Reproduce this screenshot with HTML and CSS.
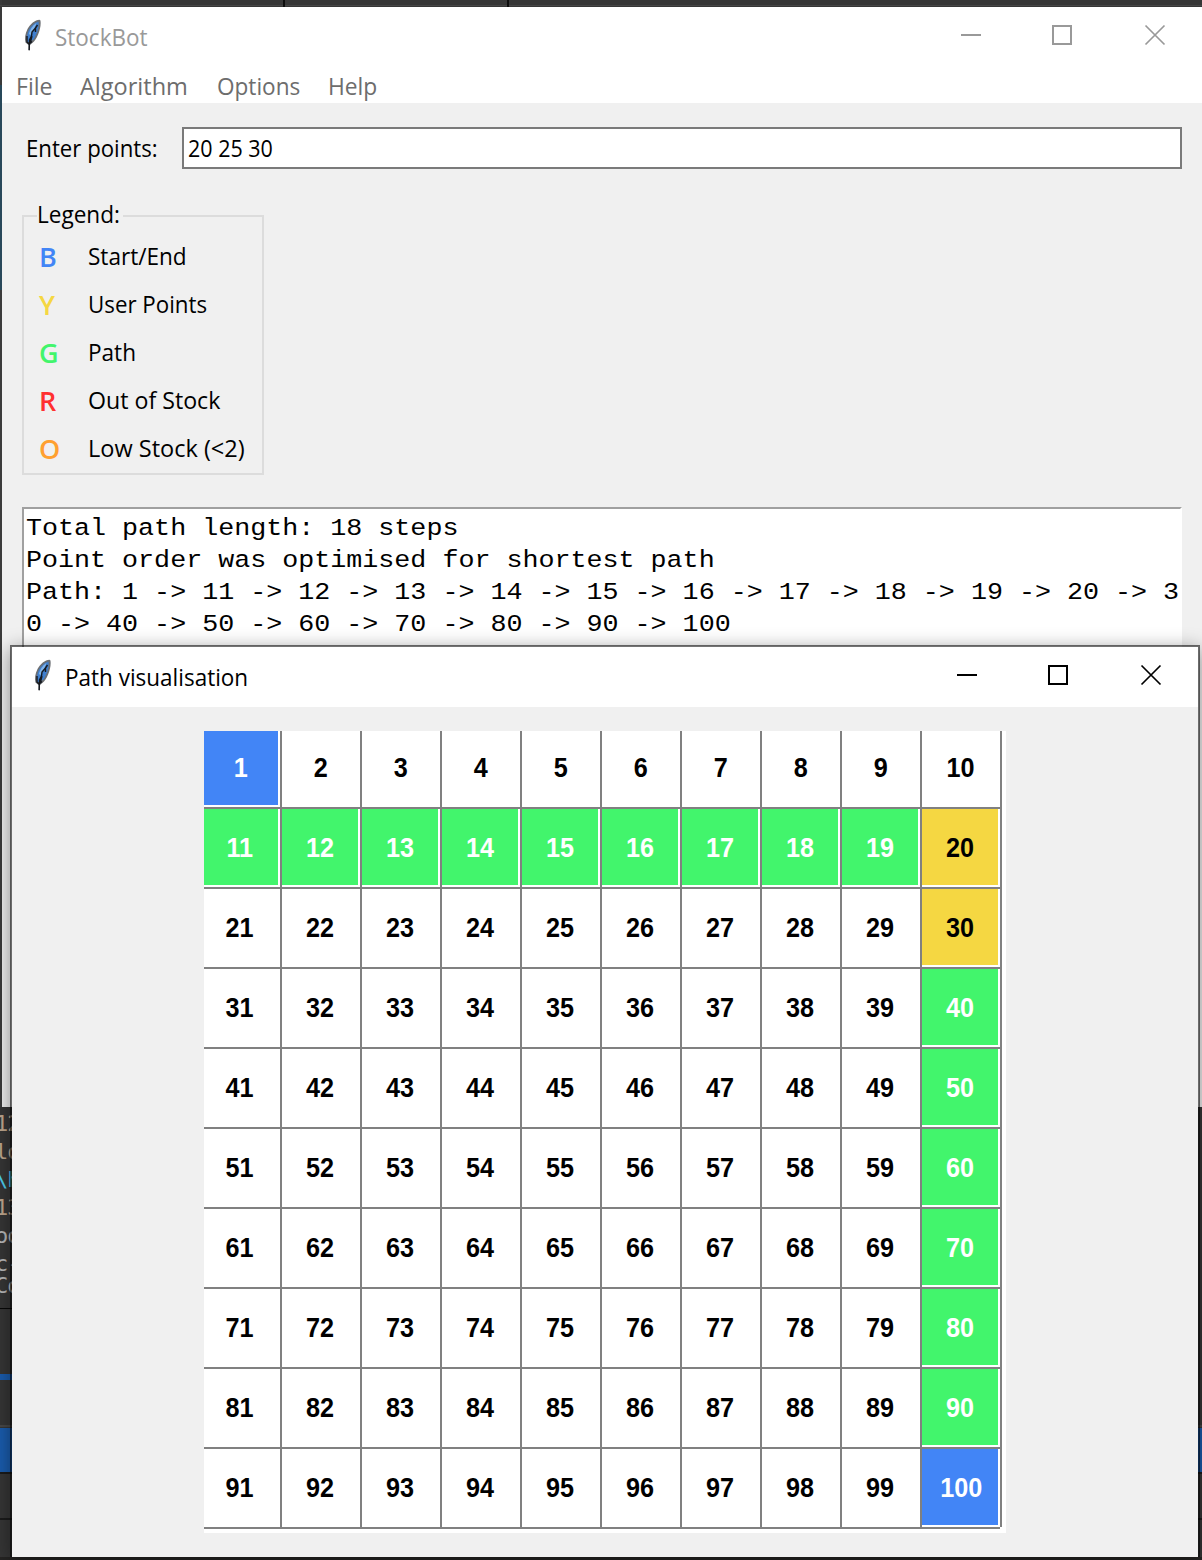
FILE: index.html
```
<!DOCTYPE html>
<html lang="en">
<head>
<meta charset="utf-8">
<title>StockBot</title>
<link rel="stylesheet" href="styles.css">
</head>
<body>
<svg width="0" height="0" class="defs">
  <symbol id="feather" viewBox="0 0 20 32">
    <path d="M16.5 .8C12 1 7.200 5 4.500 10C2 15 1.500 20 2.500 23.500L5.500 26V31.500H7V26L11 22.500C15 18 18.500 8 17.500 1.500Z" fill="#6c6f73"/>
    <path d="M15.500 2.500C11 4 7 8 5.200 12.500C3.500 17 3.800 21 4.600 23.500L10.500 20.500C13.500 16 16.500 8 15.500 2.500Z" fill="#3f7fce"/>
    <path d="M13.500 4C9.500 6.500 6.800 11 5.800 15L7.500 16L11 10Z" fill="#80b4ea"/>
    <path d="M14.500 6L12.500 9L9 13L8.500 17L6.500 21L6.200 31M12.500 9V13M9 17L7.500 23M4 17V23L6 25L9 22.500" fill="none" stroke="#15191f" stroke-width="1.400"/>
  </symbol>
</svg>

<div class="backdrop">
  <div class="code-edge">
    <span class="tan">12</span><span class="tan">lo</span><span class="cyan">\h</span><span class="tan">13</span><span>oo</span><span>c-</span><span>Co</span>
  </div>
  <i class="tab-mark first"></i><i class="tab-mark second"></i>
</div>

<main class="window main-window">
  <header class="titlebar">
    <svg class="feather"><use href="#feather"/></svg>
    <span class="title">StockBot</span>
    <svg class="controls" width="206" height="24" viewBox="0 0 206 24">
      <path d="M0 12H20M92 3H110V21H92Z" fill="none" stroke="currentColor" stroke-width="2"/>
      <path d="M184.500 2.500L203.500 21.500M203.500 2.500L184.500 21.500" fill="none" stroke="currentColor" stroke-width="1.700"/>
    </svg>
  </header>
  <nav class="menu"><span class="m-file">File</span><span class="m-algo">Algorithm</span><span class="m-opts">Options</span><span class="m-help">Help</span></nav>
  <section class="content">
    <div class="entry-row">
      <label class="entry-label">Enter points:</label>
      <div class="entry"><span>20 25 30</span></div>
    </div>
    <fieldset class="legend">
      <legend><span>Legend:</span></legend>
      <div class="item"><b class="blue">B</b><span class="t1">Start/End</span></div>
      <div class="item"><b class="yellow">Y</b><span class="t2">User Points</span></div>
      <div class="item"><b class="green">G</b><span class="t3">Path</span></div>
      <div class="item"><b class="red">R</b><span class="t4">Out of Stock</span></div>
      <div class="item"><b class="orange">O</b><span class="t5">Low Stock (&lt;2)</span></div>
    </fieldset>
    <div class="output"><pre>Total path length: 18 steps
Point order was optimised for shortest path
Path: 1 -&gt; 11 -&gt; 12 -&gt; 13 -&gt; 14 -&gt; 15 -&gt; 16 -&gt; 17 -&gt; 18 -&gt; 19 -&gt; 20 -&gt; 3
0 -&gt; 40 -&gt; 50 -&gt; 60 -&gt; 70 -&gt; 80 -&gt; 90 -&gt; 100</pre></div>
  </section>
</main>

<section class="window child-window">
  <header class="titlebar">
    <svg class="feather"><use href="#feather"/></svg>
    <span class="title">Path visualisation</span>
    <svg class="controls" width="206" height="24" viewBox="0 0 206 24">
      <path d="M0 12H20M92 3H110V21H92Z" fill="none" stroke="currentColor" stroke-width="2"/>
      <path d="M184.500 2.500L203.500 21.500M203.500 2.500L184.500 21.500" fill="none" stroke="currentColor" stroke-width="1.700"/>
    </svg>
  </header>
  <div class="board"><div class="grid" id="grid"></div></div>
</section>
<script src="grid.js"></script>
</body>
</html>
```
FILE: styles.css
```
* { box-sizing: border-box; }
body {
  margin: 0;
  position: relative;
  width: 1202px;
  height: 1560px;
  overflow: hidden;
  background: #2c2c2c;
  font-family: "Open Sans", "Noto Sans", sans-serif;
  font-size: 24px;
  color: #000;
}
.defs { position: absolute; }

/* editor showing behind the windows */
.backdrop {
  position: absolute;
  inset: 0;
  background:
    linear-gradient(#252423, #252423) 0 1557px / 100% 3px no-repeat,
    linear-gradient(#1b1b1b, #1b1b1b) 0 1518px / 100% 2px no-repeat,
    linear-gradient(#1b1b1b, #1b1b1b) 0 1472px / 100% 2px no-repeat,
    linear-gradient(#1a5cad, #1a5cad) 0 1428px / 100% 44px no-repeat,
    linear-gradient(#484848, #484848) 0 1425px / 100% 2px no-repeat,
    linear-gradient(#1a5cad, #1a5cad) 0 1374px / 12px 6px no-repeat,
    linear-gradient(#080808, #080808) 0 1308px / 12px 1px no-repeat,
    linear-gradient(#454545, #454545) 0 5px / 100% 1px no-repeat,
    linear-gradient(#3a3a3a 0 85px, #28485a 85px 290px, #3b3b3b 290px 1107px) 0 0 / 2px 1107px no-repeat,
    #363636;
}
.code-edge {
  position: absolute;
  left: -5px;
  top: 1110px;
  width: 17px;
  overflow: hidden;
  color: #b8b8b8;
  font: 22px/28px "DejaVu Sans Mono", monospace;
  letter-spacing: -1px;
  display: flex;
  flex-direction: column;
}
.code-edge span:nth-child(6) { height: 22px; }
.tan { color: #c0a88e; }
.cyan { color: #4fd0f0; }
.tab-mark {
  position: absolute;
  top: 0;
  width: 2px;
  height: 7px;
  background: #0c0c0c;
}
.tab-mark.first { left: 283px; }
.tab-mark.second { left: 507px; }

.window { position: absolute; background: #f0f0f0; }
.main-window {
  left: 2px;
  top: 7px;
  width: 1200px;
  height: 1100px;
  overflow: hidden;
}
.child-window {
  left: 10px;
  top: 645px;
  width: 1190px;
  height: 912px;
  border: 2px solid rgba(0, 0, 0, .55);
  border-bottom: 0;
  background-clip: padding-box;
  box-shadow: 0 4px 18px rgba(0, 0, 0, .42);
}

.titlebar {
  display: flex;
  height: 60px;
  background: #fff;
}
.feather { width: 20px; height: 32px; margin: 12px 0 0 21px; }
.title { line-height: 60px; white-space: nowrap; margin-left: 12px; transform: scaleX(.937); transform-origin: 0 0; }
.controls { margin: 16px 35px 0 auto; }
.main-window .titlebar { color: #999; }

.menu {
  display: flex;
  height: 36px;
  padding-left: 14px;
  background: #fff;
  color: #6d6d6d;
  line-height: 38px;
}
.menu span { white-space: nowrap; transform-origin: 0 0; }
.m-file { width: 64px; transform: scaleX(.96); }
.m-algo { width: 137px; transform: scaleX(.98); }
.m-opts { width: 111px; transform: scaleX(.94); }
.m-help { transform: scaleX(.95); }

.content { padding: 24px 20px 0; }
.entry-row { display: flex; height: 42px; }
.entry-label {
  width: 156px;
  margin-left: 4px;
  line-height: 42px;
  white-space: nowrap;
  transform: scaleX(.925);
  transform-origin: 0 0;
}
.entry { flex: 1; border: 2px solid #7a7a7a; background: #fff; padding-left: 4px; line-height: 38px; }
.entry span { display: inline-block; transform: scaleX(.895); transform-origin: 0 0; }

.legend {
  width: 242px;
  height: 274px;
  margin: 32px 0 0;
  padding: 0 0 0 16px;
  border: 2px solid #dcdcdc;
}
.legend legend { width: 86px; height: 30px; padding: 0; line-height: 28px; margin-left: -3px; white-space: nowrap; }
.legend legend span { display: inline-block; transform: translateY(-1px) scaleX(.94); transform-origin: 0 0; }
.item { display: flex; height: 48px; line-height: 48px; white-space: nowrap; }
.item:nth-of-type(1) { margin-top: 1px; }
.item b { width: 49px; margin-left: -1px; font: 600 27px/49px "Open Sans", sans-serif; }
.item span { transform-origin: 0 0; }
.t1 { transform: scaleX(.94); }
.t2 { transform: scaleX(.93); }
.t3 { transform: scaleX(.94); }
.t4 { transform: scaleX(.965); }
.t5 { transform: scaleX(.98); }
.blue { color: #4285f6; }
.yellow { color: #f5d742; }
.green { color: #42f56c; }
.red { color: #ff3030; }
.orange { color: #ffa030; }

.output {
  height: 620px;
  margin: 32px 0 0;
  padding: 4px 0 0 2px;
  border: 2px solid #a0a0a0;
  border-right-color: #fff;
  background: #fff;
}
/* wide, low letters as in Courier */
.output pre {
  margin: 0;
  font: 26.7px/36px "Liberation Mono", monospace;
  transform: scaleY(.8889);
  transform-origin: 0 0;
}

.board { padding: 24px 192px; }
.grid {
  display: grid;
  grid-template-columns: 78px repeat(9, 80px);
  grid-template-rows: 78px repeat(9, 80px);
  width: 802px;
  height: 802px;
  background: #fff;
}
.cell {
  display: flex;
  align-items: center;
  justify-content: center;
  position: relative;
  padding: 0 2px 2px 0;
  border-right: 2px solid #808080;
  border-bottom: 2px solid #808080;
  background-clip: content-box;
  font: bold 28px/1 "Liberation Sans", Arial, sans-serif;
}
.cell span { transform: translate(.5px, 1px) scaleX(.9); }
.cell:nth-child(-n+10) span { transform: translateX(1px) scaleX(.9); }
.cell:nth-child(10n+1) span { transform: translate(-1px, 1px) scaleX(.9); }
.cell:first-child span { transform: scaleX(.9); }
.cell:last-child span { transform: translate(1px, 1px) scaleX(.9); }
.cell:last-child::after {
  content: "";
  position: absolute;
  right: -2px;
  bottom: -2px;
  width: 2px;
  height: 2px;
  background: #fff;
}
.cell.user { background-color: #f5d742; }
.cell.path { background-color: #42f56c; color: #fff; }
.cell.end { background-color: #4285f6; color: #fff; }
```
FILE: grid.js
```
const ends = [1, 100];
const user = [20, 30];
const path = [11, 12, 13, 14, 15, 16, 17, 18, 19, 40, 50, 60, 70, 80, 90];
const grid = document.getElementById("grid");

for (let n = 1; n <= 100; n++) {
  const cell = document.createElement("div");
  const label = document.createElement("span");
  cell.className = "cell";
  if (ends.includes(n)) cell.classList.add("end");
  if (user.includes(n)) cell.classList.add("user");
  if (path.includes(n)) cell.classList.add("path");
  label.textContent = n;
  cell.append(label);
  grid.append(cell);
}
```
